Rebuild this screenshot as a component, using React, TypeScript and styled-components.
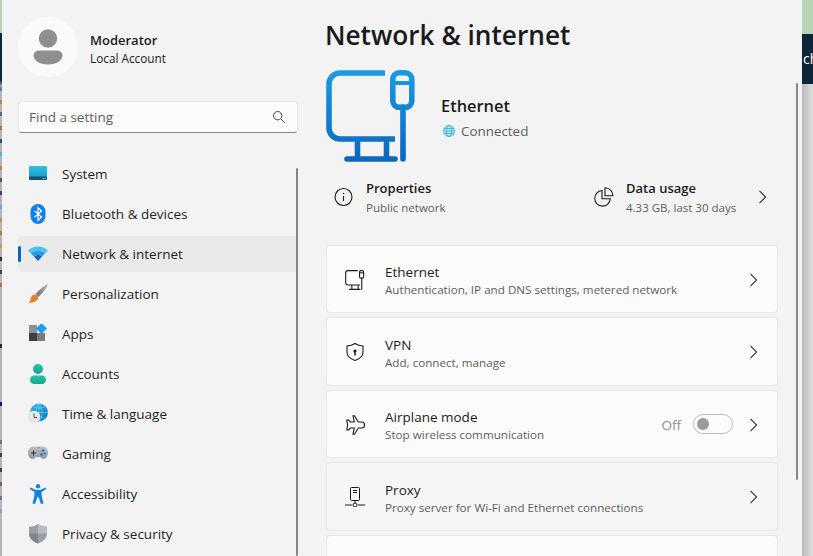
import React from "react";
import styled, { createGlobalStyle } from "styled-components";

const GlobalStyle = createGlobalStyle`
  html, body, #root {
    margin: 0;
    height: 100%;
    overflow: hidden;
  }
  body {
    font-family: "Open Sans", "Noto Sans", sans-serif;
    color: #1b1b1b;
    background: #cfcfcf;
  }
`;

const spots: [number, string][] = [
  [87, "#4a7fc0"], [100, "#b08a4a"], [112, "#5a6a80"], [126, "#c06a3a"], [139, "#3a4a6a"],
  [152, "#58b0d8"], [166, "#c08050"], [178, "#555555"], [191, "#3a3aa0"], [205, "#70a8e0"],
  [218, "#c09040"], [231, "#b08040"], [244, "#c0a060"], [257, "#333333"], [270, "#444444"],
  [283, "#a08040"], [344, "#2a2a2a"], [402, "#101080"], [440, "#608060"], [453, "#404050"],
  [468, "#404040"], [482, "#806060"], [496, "#7070a0"], [509, "#90a8d0"],
];

const leftStops = spots
  .map(([y, c]) => `#b4b4b4 ${y}px, ${c} ${y}px, ${c} ${y + 4}px, #b4b4b4 ${y + 4}px`)
  .join(", ");

const Screen = styled.div`
  display: flex;
  width: 813px;
  height: 556px;
  overflow: hidden;
`;

const LeftEdge = styled.div<{ $stops: string }>`
  width: 2px;
  flex: none;
  background: linear-gradient(
    to bottom,
    #b5d0b6 0,
    #b5d0b6 33px,
    #0e2a3e 33px,
    #0e2a3e 80px,
    ${(p) => p.$stops},
    #b4b4b4 556px
  );
`;

const Window = styled.div`
  width: 800px;
  flex: none;
  display: flex;
  background: #f3f3f3;
  position: relative;
`;

const RightEdge = styled.div`
  flex: 1;
  display: flex;
  flex-direction: column;
  overflow: hidden;
`;

const DesktopGreen = styled.div`
  height: 34px;
  background: #b9d3b9;
`;

const DesktopBanner = styled.div`
  height: 50px;
  background: #0d2638;
  color: #ffffff;
  font-size: 14px;
  line-height: 50px;
  padding-left: 1px;
  white-space: nowrap;
`;

const DesktopRest = styled.div`
  flex: 1;
  background: linear-gradient(to right, #b9b9b9, #d6d6d6 8px, #dcdcdc);
`;

const Sidebar = styled.aside`
  width: 280px;
  flex: none;
  padding: 17px 0 0 16px;
  position: relative;
`;

const Profile = styled.div`
  display: flex;
  align-items: center;
  gap: 12px;
  height: 60px;
`;

const Avatar = styled.div`
  width: 60px;
  height: 60px;
  border-radius: 50%;
  background: #fafafa;
  display: flex;
  align-items: center;
  justify-content: center;
`;

const ProfileText = styled.div`
  display: flex;
  flex-direction: column;
  gap: 1px;
  margin-top: 3px;
`;

const ProfileName = styled.div`
  font-size: 13px;
  line-height: 18px;
  font-weight: 600;
`;

const ProfileKind = styled.div`
  font-size: 11.8px;
  line-height: 16px;
`;

const SearchBox = styled.div`
  margin-top: 24px;
  height: 32px;
  box-sizing: border-box;
  display: flex;
  align-items: center;
  justify-content: space-between;
  padding: 0 11px 0 10px;
  background: #fbfbfb;
  border: 1px solid #e6e6e6;
  border-bottom-color: #868686;
  border-radius: 4px;
  font-size: 13.5px;
  color: #5d5d5d;
`;

const Nav = styled.nav`
  margin-top: 23px;
  display: flex;
  flex-direction: column;
  gap: 4px;
`;

const NavItem = styled.div<{ $active?: boolean }>`
  height: 36px;
  flex: none;
  display: flex;
  align-items: center;
  gap: 14px;
  padding-left: 10px;
  border-radius: 4px;
  font-size: 13.5px;
  color: #1f1f1f;
  position: relative;
  background: ${(p) => (p.$active ? "#eaeaea" : "transparent")};
`;

const ActiveMark = styled.span`
  position: absolute;
  left: 0;
  top: 10px;
  width: 3px;
  height: 16px;
  border-radius: 2px;
  background: #0067c0;
`;

const Scrollbar = styled.div<{ $top: number; $bottom: number; $right: number }>`
  position: absolute;
  top: ${(p) => p.$top}px;
  bottom: ${(p) => p.$bottom}px;
  right: ${(p) => p.$right}px;
  width: 2px;
  background: #868686;
  border-radius: 1px;
`;

const Main = styled.main`
  flex: 1;
  min-width: 0;
  padding: 0 24px 0 28px;
`;

const PageTitle = styled.h1`
  margin: 0 0 0 -1px;
  height: 70px;
  font-size: 26.2px;
  line-height: 70px;
  font-weight: 600;
  color: #1a1a1a;
  white-space: nowrap;
`;

const Hero = styled.section`
  display: flex;
  align-items: center;
  gap: 23px;
  height: 92px;
`;

const HeroText = styled.div`
  display: flex;
  flex-direction: column;
  gap: 4px;
  margin-top: 4px;
`;

const HeroName = styled.div`
  font-size: 16.4px;
  line-height: 22px;
  font-weight: 600;
`;

const HeroStatus = styled.div`
  display: flex;
  align-items: center;
  gap: 6px;
  padding-left: 2px;
  font-size: 13.4px;
  line-height: 20px;
  color: #5d5d5d;
`;

const InfoRow = styled.section`
  display: flex;
  height: 70px;
  margin-bottom: 12.7px;
`;

const InfoBlock = styled.div<{ $wide?: boolean }>`
  display: flex;
  align-items: center;
  gap: 12px;
  flex: ${(p) => (p.$wide ? "1" : "none")};
  width: ${(p) => (p.$wide ? "auto" : "184px")};
  padding-left: ${(p) => (p.$wide ? "8px" : "0")};
`;

const InfoText = styled.div`
  display: flex;
  flex-direction: column;
  gap: 3px;
  flex: 1;
`;

const InfoTitle = styled.div`
  font-size: 13px;
  line-height: 18px;
  font-weight: 600;
`;

const InfoSub = styled.div`
  font-size: 11.5px;
  line-height: 16px;
  color: #5d5d5d;
`;

const InfoChevron = styled.div`
  display: flex;
  margin-right: 8px;
`;

const Cards = styled.div`
  display: flex;
  flex-direction: column;
  gap: 4px;
`;

const Card = styled.div<{ $hover?: boolean }>`
  height: 68.5px;
  flex: none;
  box-sizing: border-box;
  display: flex;
  align-items: center;
  gap: 20px;
  padding: 1.5px 16px 0 18px;
  border: 1px solid #e8e8e8;
  border-radius: 4px;
  background: ${(p) => (p.$hover ? "#f6f6f6" : "#fbfbfb")};
`;

const CardText = styled.div`
  flex: 1;
  min-width: 0;
  display: flex;
  flex-direction: column;
  margin-top: 2px;
`;

const CardTitle = styled.div`
  font-size: 13.5px;
  line-height: 19px;
`;

const CardSub = styled.div`
  font-size: 11.65px;
  line-height: 16px;
  color: #5d5d5d;
  white-space: nowrap;
`;

const ToggleLabel = styled.span`
  font-size: 13.5px;
  color: #8f8f8f;
  margin-right: -8px;
`;

const ToggleTrack = styled.span`
  width: 40px;
  height: 20px;
  box-sizing: border-box;
  border: 1px solid #bdbdbd;
  border-radius: 10px;
  display: flex;
  align-items: center;
  padding-left: 3px;
  margin: 0 -8px 1.5px 0;
`;

const ToggleKnob = styled.span`
  width: 12px;
  height: 12px;
  border-radius: 50%;
  background: #9a9a9a;
`;

const Chevron = ({ color = "#333" }: { color?: string }) => (
  <svg width="16" height="16" viewBox="0 0 16 16" fill="none">
    <path d="M5.5 1.8 11.6 8l-6.1 6.2" stroke={color} strokeWidth="1.1" />
  </svg>
);

const AvatarIcon = () => (
  <svg width="30" height="36" viewBox="0 0 30 36">
    <circle cx="15" cy="9.5" r="9.2" fill="#8f8f8f" />
    <path d="M7 21.5h16c4 0 6.5 2 6.5 5 0 5-6 9-14.500 9S.5 31.500.5 26.500c0-3 2.500-5 6.500-5Z" fill="#8f8f8f" />
  </svg>
);

const SearchIcon = () => (
  <svg width="14" height="14" viewBox="0 0 14 14" fill="none" stroke="#444" strokeWidth="1">
    <circle cx="5.700" cy="5.700" r="4.200" />
    <path d="m8.800 8.800 4 4" />
  </svg>
);

const SystemIcon = () => (
  <svg width="20" height="20" viewBox="0 0 20 20">
    <defs>
      <linearGradient id="sys" x1="0" y1="0" x2="0" y2="1">
        <stop offset="0" stopColor="#2fc0dc" />
        <stop offset="1" stopColor="#1a9fd2" />
      </linearGradient>
    </defs>
    <rect x="1" y="2" width="18" height="11" rx="1" fill="url(#sys)" />
    <path d="M1 12.500h18V15a1 1 0 0 1-1 1H2a1 1 0 0 1-1-1Z" fill="#0e5474" />
    <path d="M14.500 14h1.200v1h-1.200ZM16.500 14h1.200v1h-1.200Z" fill="#9fd8ea" />
  </svg>
);

const BluetoothIcon = () => (
  <svg width="20" height="20" viewBox="0 0 20 20">
    <rect x="2.500" y="0" width="15" height="20" rx="7.500" fill="#0f80ea" />
    <path d="m6.500 6.700 7 6.300-3.500 3.300V3.700l3.500 3.300-7 6.300" fill="none" stroke="#fff" strokeWidth="1.200" />
  </svg>
);

const WifiIcon = () => (
  <svg width="20" height="20" viewBox="0 0 20 20">
    <path d="M0 6.500C2.800 3.800 6.200 2.500 10 2.500s7.200 1.300 10 4l-3 3C15 7.600 12.700 6.700 10 6.700s-5 .9-7 2.800Z" fill="#4cc4f2" />
    <path d="M3 9.500C5 7.600 7.300 6.700 10 6.700s5 .9 7 2.800l-3 3c-1.100-1-2.400-1.600-4-1.600s-2.900.6-4 1.600Z" fill="#2a9be2" />
    <path d="M6 12.500c1.100-1 2.400-1.600 4-1.600s2.900.6 4 1.600l-4 4.500Z" fill="#1262c4" />
  </svg>
);

const BrushIcon = () => (
  <svg width="20" height="20" viewBox="0 0 20 20">
    <defs>
      <linearGradient id="brush" x1="0" y1="1" x2="1" y2="0">
        <stop offset="0" stopColor="#6e6e6e" />
        <stop offset="1" stopColor="#b9b9b9" />
      </linearGradient>
    </defs>
    <path d="M19.500 0 20 .5c-2 4.500-5.500 9-9.500 12.200L7.500 10C11 6 15 2.500 19.500 0Z" fill="url(#brush)" />
    <path d="M7 10.500c2 .5 3.200 1.700 3.300 3-.2 3-3.800 5.400-9.800 5.500 2-1.500 1.700-3.500 2.500-5.500.6-1.700 2.200-3 4-3Z" fill="#ec7f2a" />
  </svg>
);

const AppsIcon = () => (
  <svg width="20" height="20" viewBox="0 0 20 20">
    <rect x="1" y="1" width="8" height="8" fill="#8e9297" />
    <rect x="1" y="9" width="8" height="8" fill="#3f3f3f" />
    <rect x="9" y="9" width="8" height="8" fill="#7b7b7b" />
    <path d="m13.500-1 5.500 5.500-5.500 5.500L8 4.500Z" fill="#1f9cec" />
  </svg>
);

const AccountsIcon = () => (
  <svg width="20" height="20" viewBox="0 0 20 20">
    <defs>
      <linearGradient id="acct" x1="0" y1="0" x2="0" y2="1">
        <stop offset="0" stopColor="#22c4a6" />
        <stop offset="1" stopColor="#13a88e" />
      </linearGradient>
    </defs>
    <circle cx="10" cy="5" r="5" fill="url(#acct)" />
    <rect x="2" y="11.500" width="16" height="8.500" rx="4.200" fill="url(#acct)" />
  </svg>
);

const TimeIcon = () => (
  <svg width="20" height="20" viewBox="0 0 20 20" overflow="visible">
    <defs>
      <linearGradient id="glb" x1="0" y1="0" x2="1" y2="1">
        <stop offset="0" stopColor="#28b8e4" />
        <stop offset="1" stopColor="#0d74c8" />
      </linearGradient>
    </defs>
    <circle cx="11" cy="8.500" r="9" fill="url(#glb)" />
    <path d="M11-.5v18M2 8.500h18M5 2.500c3 2 9 2 12 0M5 14.500c3-2 9-2 12 0M11-.5c-4 4-4 14 0 18M11-.5c4 4 4 14 0 18" fill="none" stroke="#9fe0f2" strokeWidth=".5" />
    <circle cx="6" cy="13" r="6.200" fill="#e8e8e8" />
    <path d="M6 9.500V13.500h3" fill="none" stroke="#555" strokeWidth="1" />
  </svg>
);

const GamingIcon = () => (
  <svg width="20" height="20" viewBox="0 0 20 20">
    <defs>
      <linearGradient id="pad" x1="0" y1="0" x2="0" y2="1">
        <stop offset="0" stopColor="#bdc1c6" />
        <stop offset="1" stopColor="#93979c" />
      </linearGradient>
    </defs>
    <path d="M5.500 2.500h9c3.200 0 5.500 2.700 5.500 6 0 3.700-2 6.500-4.500 6.500-1.500 0-2.500-1-3.300-2H7.800c-.8 1-1.800 2-3.300 2C2 15 0 12.200 0 8.500c0-3.300 2.300-6 5.500-6Z" fill="url(#pad)" />
    <path d="M3 9h5M5.500 6.500v5" stroke="#333" strokeWidth="1" />
    <circle cx="15" cy="6.500" r="1.300" fill="#1270d8" />
    <circle cx="13.500" cy="10.500" r="1.300" fill="#1270d8" />
    <circle cx="16.800" cy="9.500" r="1.100" fill="#1270d8" />
    <path d="M9.300 3.700h.8M11 3.700h.8" stroke="#555" strokeWidth=".7" />
  </svg>
);

const AccessIcon = () => (
  <svg width="20" height="20" viewBox="0 0 20 20">
    <circle cx="10" cy="2.200" r="2.200" fill="#1481dc" />
    <path d="M2.500 3.500 8 6h4l5.500-2.500.7 1.500L13.500 8l.2 4 1.800 7.500-2.500.5L10.500 13h-1L7 20l-2.500-.5L6.300 12l.2-4L1.800 5Z" fill="#1481dc" />
  </svg>
);

const ShieldIcon = () => (
  <svg width="20" height="20" viewBox="0 0 20 20">
    <path d="M10 0c2.500 1.800 5.500 2.700 9 2.800V9c0 5-3.500 8.500-9 10.500C4.500 17.500 1 14 1 9V2.800C4.500 2.700 7.500 1.800 10 0Z" fill="#9aa0a6" />
    <path d="M10 0c2.500 1.800 5.500 2.700 9 2.800V9.500h-9Z" fill="#b8bcc1" />
    <path d="M10 9.500H1V9c0 5 3.500 8.500 9 10.500Z" fill="#7f858b" />
  </svg>
);

const HeroGradient = () => (
  <defs>
    <linearGradient id="eth" gradientUnits="userSpaceOnUse" x1="370" y1="70" x2="370" y2="162">
      <stop offset="0" stopColor="#1a9be6" />
      <stop offset="1" stopColor="#0a66bd" />
    </linearGradient>
  </defs>
);

const MonitorPlug = ({ size, thick }: { size: number; thick?: boolean }) => (
  <svg width={size} height={size} viewBox="326 70 92 92" fill="none" stroke={thick ? "url(#eth)" : "#1b1b1b"} strokeWidth={thick ? 5.6 : 5}>
    {thick && <HeroGradient />}
    <path d="M385 73H340a11 11 0 0 0-11 11v44a11 11 0 0 0 11 11h55" />
    <path d="M357.500 139v20M386.500 139v20" />
    <path d="M347 159h48" strokeLinecap="round" />
    <rect x="392.800" y="72.800" width="19" height="34.500" rx="6.500" />
    <path d="M392.800 83h19" strokeWidth={thick ? 4 : 5} />
    <path d="M403 107v52" strokeLinecap="round" />
  </svg>
);

const MiniGlobe = () => (
  <svg width="12" height="12" viewBox="0 0 12 12" fill="none" stroke="#3fb2d8" strokeWidth=".9">
    <circle cx="6" cy="6" r="5.500" fill="#bfe6f2" />
    <ellipse cx="6" cy="6" rx="2.500" ry="5.500" />
    <path d="M.5 6h11M1.200 3.500h9.600M1.200 8.500h9.600" />
  </svg>
);

const InfoIcon = () => (
  <svg width="20" height="20" viewBox="0 0 20 20" fill="none" stroke="#1b1b1b" strokeWidth="1.100">
    <circle cx="9.500" cy="10" r="8.500" />
    <path d="M9.500 9v5" />
    <circle cx="9.500" cy="6.500" r=".8" fill="#1b1b1b" stroke="none" />
  </svg>
);

const PieIcon = () => (
  <svg width="20" height="20" viewBox="0 0 20 20" fill="none" stroke="#1b1b1b" strokeWidth="1.100">
    <path d="M8 3.500a7.800 7.800 0 1 0 8.300 8.300H8Z" />
    <path d="M11 .8a8.200 8.200 0 0 1 8 8H11Z" />
  </svg>
);

const ShieldLineIcon = () => (
  <svg width="20" height="20" viewBox="0 0 20 20" fill="none" stroke="#1b1b1b" strokeWidth="1.100">
    <path d="M10 1.500c2.300 1.600 4.800 2.400 8 2.500v6c0 4-2.800 6.800-8 8.500-5.200-1.700-8-4.500-8-8.500V4c3.200-.1 5.700-.9 8-2.500Z" />
    <circle cx="10" cy="9" r="1.600" fill="#1b1b1b" stroke="none" />
    <path d="M10 9v4.500" strokeWidth="1.500" />
  </svg>
);

const PlaneIcon = () => (
  <svg width="20" height="20" viewBox="0 0 20 20" fill="none" stroke="#1b1b1b" strokeWidth="1.100">
    <path d="M8 .8h1.500l3.800 6.200H17c1.500 0 2.500 1.300 2.500 3s-1 3-2.500 3h-3.700l-3.800 6.200H8l1.300-6.200H5.500L3.500 15H1.800l.8-5-.8-5h1.700l2 2h3.800Z" />
  </svg>
);

const ProxyIcon = () => (
  <svg width="20" height="20" viewBox="0 0 20 20" fill="none" stroke="#1b1b1b" strokeWidth="1">
    <rect x="5.500" y="0.500" width="9" height="13" rx="1" />
    <path d="M8 3.500h4M8 5.500h4M10 13.500v2.500M0 18h7M13 18h7" />
    <circle cx="10" cy="18" r="2" />
  </svg>
);

// sits below the fold, only the top of the title shows
const DialUpIcon = () => (
  <svg width="20" height="20" viewBox="0 0 20 20" fill="none" stroke="#1b1b1b" strokeWidth="1">
    <rect x="2.500" y="6.500" width="15" height="10" rx="1" />
    <path d="M6 6.500V3.500h8v3" />
  </svg>
);

const navItems: { label: string; icon: React.ReactNode; active?: boolean }[] = [
  { label: "System", icon: <SystemIcon /> },
  { label: "Bluetooth & devices", icon: <BluetoothIcon /> },
  { label: "Network & internet", icon: <WifiIcon />, active: true },
  { label: "Personalization", icon: <BrushIcon /> },
  { label: "Apps", icon: <AppsIcon /> },
  { label: "Accounts", icon: <AccountsIcon /> },
  { label: "Time & language", icon: <TimeIcon /> },
  { label: "Gaming", icon: <GamingIcon /> },
  { label: "Accessibility", icon: <AccessIcon /> },
  { label: "Privacy & security", icon: <ShieldIcon /> },
];

export default function App() {
  return (
    <Screen>
      <GlobalStyle />
      <LeftEdge $stops={leftStops} />
      <Window>
        <Sidebar>
          <Profile>
            <Avatar>
              <AvatarIcon />
            </Avatar>
            <ProfileText>
              <ProfileName>Moderator</ProfileName>
              <ProfileKind>Local Account</ProfileKind>
            </ProfileText>
          </Profile>
          <SearchBox>
            Find a setting
            <SearchIcon />
          </SearchBox>
          <Nav>
            {navItems.map((item) => (
              <NavItem key={item.label} $active={item.active}>
                {item.active && <ActiveMark />}
                {item.icon}
                {item.label}
              </NavItem>
            ))}
          </Nav>
          <Scrollbar $top={168} $bottom={0} $right={0} />
        </Sidebar>
        <Main>
          <PageTitle>Network &amp; internet</PageTitle>
          <Hero>
            <MonitorPlug size={92} thick />
            <HeroText>
              <HeroName>Ethernet</HeroName>
              <HeroStatus>
                <MiniGlobe />
                Connected
              </HeroStatus>
            </HeroText>
          </Hero>
          <InfoRow>
            <InfoBlock $wide>
              <InfoIcon />
              <InfoText>
                <InfoTitle>Properties</InfoTitle>
                <InfoSub>Public network</InfoSub>
              </InfoText>
            </InfoBlock>
            <InfoBlock>
              <PieIcon />
              <InfoText>
                <InfoTitle>Data usage</InfoTitle>
                <InfoSub>4.33 GB, last 30 days</InfoSub>
              </InfoText>
              <InfoChevron>
                <Chevron />
              </InfoChevron>
            </InfoBlock>
          </InfoRow>
          <Cards>
            <Card>
              <MonitorPlug size={20} />
              <CardText>
                <CardTitle>Ethernet</CardTitle>
                <CardSub>Authentication, IP and DNS settings, metered network</CardSub>
              </CardText>
              <Chevron />
            </Card>
            <Card>
              <ShieldLineIcon />
              <CardText>
                <CardTitle>VPN</CardTitle>
                <CardSub>Add, connect, manage</CardSub>
              </CardText>
              <Chevron />
            </Card>
            <Card>
              <PlaneIcon />
              <CardText>
                <CardTitle>Airplane mode</CardTitle>
                <CardSub>Stop wireless communication</CardSub>
              </CardText>
              <ToggleLabel>Off</ToggleLabel>
              <ToggleTrack>
                <ToggleKnob />
              </ToggleTrack>
              <Chevron />
            </Card>
            <Card $hover>
              <ProxyIcon />
              <CardText>
                <CardTitle>Proxy</CardTitle>
                <CardSub>Proxy server for Wi-Fi and Ethernet connections</CardSub>
              </CardText>
              <Chevron />
            </Card>
            <Card>
              <DialUpIcon />
              <CardText>
                <CardTitle>Dial-up</CardTitle>
                <CardSub>Set up a dial-up internet connection</CardSub>
              </CardText>
              <Chevron />
            </Card>
          </Cards>
        </Main>
        <Scrollbar $top={83} $bottom={76} $right={4} />
      </Window>
      <RightEdge>
        <DesktopGreen />
        <DesktopBanner>ch</DesktopBanner>
        <DesktopRest />
      </RightEdge>
    </Screen>
  );
}
